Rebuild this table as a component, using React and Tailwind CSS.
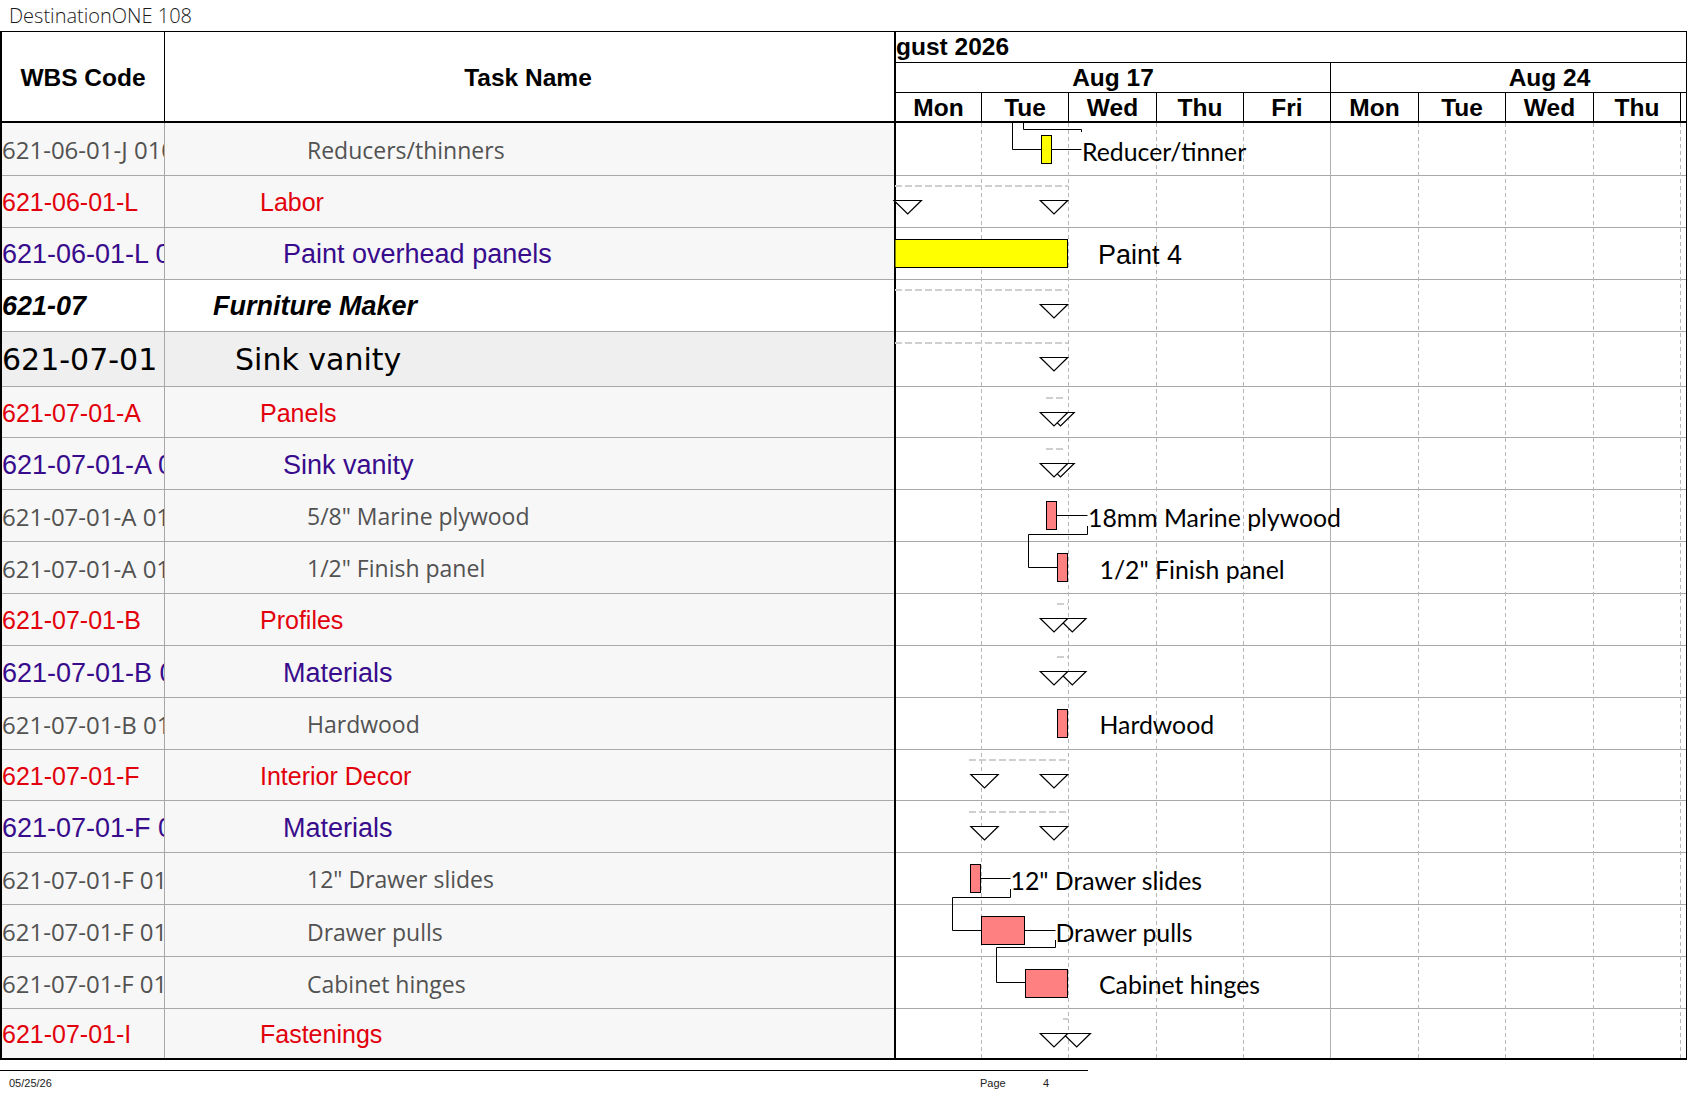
import React from "react";

const ARIAL = "font-['Liberation_Sans',Arial,sans-serif]";

const rows = [
    { h: "h-[52.5px]", wbs: "621-06-01-J 0101", name: "Reducers/thinners", kind: "leaf" },
    { h: "h-[52px]", wbs: "621-06-01-L", name: "Labor", kind: "red" },
    { h: "h-[52px]", wbs: "621-06-01-L 01", name: "Paint overhead panels", kind: "purple" },
    { h: "h-[52.5px]", wbs: "621-07", name: "Furniture Maker", kind: "l1" },
    { h: "h-[55px]", wbs: "621-07-01", name: "Sink vanity", kind: "l2" },
    { h: "h-[51px]", wbs: "621-07-01-A", name: "Panels", kind: "red" },
    { h: "h-[51.5px]", wbs: "621-07-01-A 01", name: "Sink vanity", kind: "purple" },
    { h: "h-[52px]", wbs: "621-07-01-A 0101", name: '5/8" Marine plywood', kind: "leaf" },
    { h: "h-[52px]", wbs: "621-07-01-A 0102", name: '1/2" Finish panel', kind: "leaf" },
    { h: "h-[52.5px]", wbs: "621-07-01-B", name: "Profiles", kind: "red" },
    { h: "h-[51.5px]", wbs: "621-07-01-B 01", name: "Materials", kind: "purple" },
    { h: "h-[52px]", wbs: "621-07-01-B 0101", name: "Hardwood", kind: "leaf" },
    { h: "h-[51.5px]", wbs: "621-07-01-F", name: "Interior Decor", kind: "red" },
    { h: "h-[51.5px]", wbs: "621-07-01-F 01", name: "Materials", kind: "purple" },
    { h: "h-[52px]", wbs: "621-07-01-F 0101", name: '12" Drawer slides', kind: "leaf" },
    { h: "h-[52.5px]", wbs: "621-07-01-F 0102", name: "Drawer pulls", kind: "leaf" },
    { h: "h-[51.5px]", wbs: "621-07-01-F 0103", name: "Cabinet hinges", kind: "leaf" },
    { h: "h-[51.5px]", wbs: "621-07-01-I", name: "Fastenings", kind: "red" },
];

// page y of each row top
const tops = [123, 175.5, 227.5, 279.5, 332, 387, 438, 489.5, 541.5, 593.5, 646, 697.5, 749.5, 801, 852.5, 904.5, 957, 1008.5];

const rowBg = {
    leaf: "bg-[#f7f7f7]",
    red: "bg-[#f7f7f7]",
    purple: "bg-[#f7f7f7]",
    l1: "bg-white",
    l2: "bg-[#efefef]",
};

const wbsStyle = {
    leaf: "pt-[3px] font-['Open_Sans',sans-serif] text-[24px] text-[#525252]",
    red: "pt-[3px] font-['Liberation_Sans',Arial,sans-serif] text-[25px] text-[#e2000c]",
    purple: "pt-[3px] font-['Liberation_Sans',Arial,sans-serif] text-[27px] text-[#380c8c]",
    l1: "pt-[1px] font-['Liberation_Sans',Arial,sans-serif] text-[27px] font-bold italic text-black",
    l2: "font-['DejaVu_Sans',sans-serif] text-[30px] text-black",
};

const nameStyle = {
    leaf: "pt-[3px] pl-[142px] font-['Open_Sans',sans-serif] text-[23px] text-[#525252]",
    red: "pt-[3px] pl-[95px] font-['Liberation_Sans',Arial,sans-serif] text-[25px] text-[#e2000c]",
    purple: "pt-[3px] pl-[118px] font-['Liberation_Sans',Arial,sans-serif] text-[27px] text-[#380c8c]",
    l1: "pt-[1px] pl-[48px] font-['Liberation_Sans',Arial,sans-serif] text-[27px] font-bold italic text-black",
    l2: "pl-[70px] font-['DejaVu_Sans',sans-serif] text-[30px] text-black",
};

const days = [
    { d: "Mon", w: "w-[86px]" },
    { d: "Tue", w: "w-[87px]" },
    { d: "Wed", w: "w-[88px]" },
    { d: "Thu", w: "w-[87px]" },
    { d: "Fri", w: "w-[87px]" },
    { d: "Mon", w: "w-[88px]" },
    { d: "Tue", w: "w-[87px]" },
    { d: "Wed", w: "w-[88px]" },
    { d: "Thu", w: "w-[87px]" },
    { d: "Fri", w: "w-[87px]" },
];

const gridX = [981.5, 1068.5, 1156.5, 1243.5, 1418.5, 1505.5, 1593.5, 1680.5];

// bars: [row, x1, x2, color]
const bars = [
    [0, 1041.5, 1051.5, "#ffff00"],
    [2, 895, 1067.5, "#ffff00"],
    [7, 1046.5, 1056.5, "#ff8080"],
    [8, 1057.5, 1067.5, "#ff8080"],
    [11, 1057.5, 1067.5, "#ff8080"],
    [14, 970.5, 980.5, "#ff8080"],
    [15, 981.5, 1024.5, "#ff8080"],
    [16, 1025.5, 1067.5, "#ff8080"],
];

// summary dashes: [row, x1, x2]
const dashes = [
    [1, 895, 1068],
    [3, 895, 1068],
    [4, 895, 1068],
    [5, 1046, 1064],
    [6, 1046, 1064],
    [9, 1057, 1068],
    [10, 1057, 1068],
    [12, 969, 1068],
    [13, 969, 1068],
    [17, 1063, 1068],
];

// triangles: [row, centerX]; later ones sit on top
const tris = [
    [1, 907.7], [1, 1054],
    [3, 1054],
    [4, 1054],
    [5, 1060.5], [5, 1054],
    [6, 1060.5], [6, 1054],
    [9, 1072.3], [9, 1054],
    [10, 1072.3], [10, 1054],
    [12, 984.5], [12, 1054],
    [13, 984.5], [13, 1054],
    [17, 1076.7], [17, 1054],
];

// link lines; the bit hidden behind a label's box is left out
const links = [
    "1023.5,123 1023.5,129.5 1081.5,129.5 1081.5,132",
    "1012.5,123 1012.5,149.5 1041.5,149.5",
    "1051.5,149.5 1081.5,149.5",
    "1056.5,515.5 1087.5,515.5",
    "1087.5,526 1087.5,534.5 1028.5,534.5 1028.5,567.5 1057.5,567.5",
    "980.5,878.5 1010.5,878.5",
    "1010.5,889 1010.5,897.5 952.5,897.5 952.5,930.5 981.5,930.5",
    "1024.5,930.5 1055.5,930.5",
    "1055.5,940 1055.5,947.5 996.5,947.5 996.5,982.5 1025.5,982.5",
];

const labels = [
    { t: "Reducer/tinner", x: 1082, y: 151 },
    { t: "Paint 4", x: 1098, y: 254.5, arial: true },
    { t: "18mm Marine plywood", x: 1088, y: 517 },
    { t: '1/2" Finish panel', x: 1099.5, y: 569 },
    { t: "Hardwood", x: 1099.5, y: 724.5 },
    { t: '12" Drawer slides', x: 1010.5, y: 880 },
    { t: "Drawer pulls", x: 1055.5, y: 932 },
    { t: "Cabinet hinges", x: 1099, y: 984 },
];

const GanttDrawing = () => (
    <svg className="absolute left-0 top-0 w-[790px] h-[937px] overflow-visible" width="790" height="937">
        <g transform="translate(-896,-123)">
            {gridX.map((x) => (
                <line key={x} x1={x} y1={123} x2={x} y2={1058} stroke="#b8b8b8" strokeWidth="1" strokeDasharray="4 3" />
            ))}
            <line x1={1330.5} y1={123} x2={1330.5} y2={1058} stroke="#b0b0b0" strokeWidth="1" />

            {dashes.map(([r, x1, x2], i) => (
                <line key={i} x1={x1} y1={Math.floor(tops[r] + 11)} x2={x2} y2={Math.floor(tops[r] + 11)} stroke="#cfcfcf" strokeWidth="2" strokeDasharray="7 3" />
            ))}

            {tris.map(([r, cx], i) => {
                const y = Math.floor(tops[r] + 25) + 0.5;
                return (
                    <polygon
                        key={i}
                        points={`${cx - 13.7},${y} ${cx + 13.7},${y} ${cx},${y + 13.5}`}
                        fill="#fff"
                        stroke="#000"
                        strokeWidth="1.2"
                    />
                );
            })}

            {links.map((p, i) => (
                <polyline key={i} points={p} fill="none" stroke="#000" strokeWidth="1" />
            ))}

            {bars.map(([r, x1, x2, c], i) => (
                <rect key={i} x={x1} y={Math.floor(tops[r] + 12) + 0.5} width={x2 - x1} height={28} fill={c} stroke="#000" strokeWidth="1" />
            ))}

            {labels.map((l) => (
                <text
                    key={l.t}
                    x={l.x}
                    y={l.y}
                    dominantBaseline="central"
                    fontFamily={l.arial ? "'Liberation Sans', Arial, sans-serif" : "Lato, sans-serif"}
                    fontSize={l.arial ? 27 : 24.8}
                    fill="#000"
                >
                    {l.t}
                </text>
            ))}
        </g>
    </svg>
);

const App = () => {
    return (
        <div className="w-[1687px] h-[1097px] bg-white overflow-hidden">
            {/* title */}
            <div className="h-[31px] pl-[9px] flex items-center text-[20px] text-[#1c1c1c] font-light font-['Open_Sans',sans-serif]">
                DestinationONE 108
            </div>

            {/* table */}
            <div className="flex border-t border-black w-[1687px]">
                {/* left grid */}
                <div className="w-[894px] border-l-2 border-black">
                    <div className={`flex h-[91px] border-b-2 border-black bg-white pt-[4px] ${ARIAL} text-[24.5px] font-bold text-black`}>
                        <div className="w-[163px] border-r border-black flex items-center justify-center -mt-[4px] pt-[4px]">WBS Code</div>
                        <div className="flex-1 flex items-center justify-center pr-[3px]">Task Name</div>
                    </div>
                    {rows.map((r, i) => (
                        <div
                            key={i}
                            className={`flex ${r.h} ${rowBg[r.kind]} ${i === rows.length - 1 ? "border-b-2 border-black" : "border-b border-[#a8a8a8]"}`}
                        >
                            <div className={`w-[163px] border-r border-[#a8a8a8] flex items-center overflow-hidden whitespace-nowrap ${wbsStyle[r.kind]}`}>
                                {r.wbs}
                            </div>
                            <div className={`flex-1 flex items-center overflow-hidden whitespace-nowrap ${nameStyle[r.kind]}`}>
                                {r.name}
                            </div>
                        </div>
                    ))}
                </div>

                {/* gantt */}
                <div className="w-[793px] border-l-2 border-r border-black">
                    <div className={`h-[91px] border-b-2 border-black ${ARIAL} text-[24.5px] font-bold text-black`}>
                        <div className="h-[31px] border-b border-black flex items-center leading-none">gust 2026</div>
                        <div className="h-[30px] border-b border-black flex overflow-hidden">
                            <div className="w-[435px] shrink-0 border-r border-black flex items-center justify-center pt-[2px]">Aug 17</div>
                            <div className="w-[437px] shrink-0 flex items-center justify-center pt-[2px]">Aug 24</div>
                        </div>
                        <div className="h-[28px] flex overflow-hidden">
                            {days.map((d, i) => (
                                <div key={i} className={`${d.w} shrink-0 border-r border-black flex items-center justify-center pt-[2px]`}>
                                    {d.d}
                                </div>
                            ))}
                        </div>
                    </div>
                    <div className="relative">
                        {rows.map((r, i) => (
                            <div
                                key={i}
                                className={`${r.h} bg-white ${i === rows.length - 1 ? "border-b-2 border-black" : "border-b border-[#a8a8a8]"}`}
                            />
                        ))}
                        <GanttDrawing />
                    </div>
                </div>
            </div>

            {/* footer */}
            <div className={`mt-[10px] w-[1088px] border-t-[1.5px] border-black h-[26px] flex items-center text-[11px] text-[#222] ${ARIAL}`}>
                <span className="w-[980px] pl-[9px]">05/25/26</span>
                <span className="w-[63px]">Page</span>
                <span>4</span>
            </div>
        </div>
    );
};

export default App;
